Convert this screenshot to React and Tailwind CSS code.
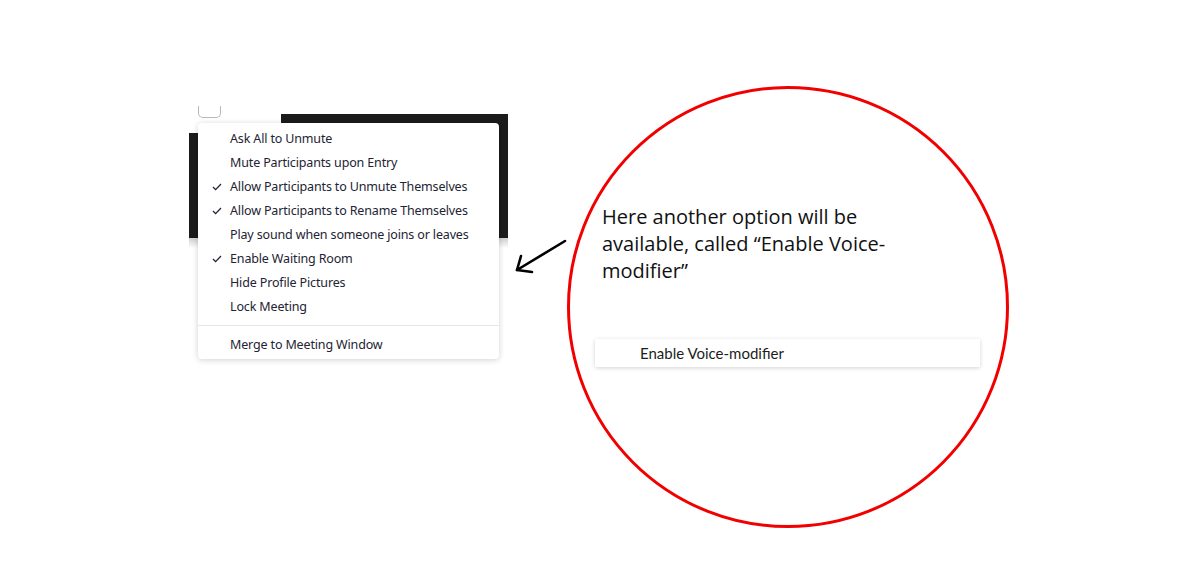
import React from 'react';

const menuItems = [
  { label: 'Ask All to Unmute', checked: false },
  { label: 'Mute Participants upon Entry', checked: false },
  { label: 'Allow Participants to Unmute Themselves', checked: true },
  { label: 'Allow Participants to Rename Themselves', checked: true },
  { label: 'Play sound when someone joins or leaves', checked: false },
  { label: 'Enable Waiting Room', checked: true },
  { label: 'Hide Profile Pictures', checked: false },
  { label: 'Lock Meeting', checked: false },
];

const Check = () => (
  <svg width="10" height="8" viewBox="0 0 10 8" className="absolute left-[14px] top-[8px]">
    <polyline points="1,4 3.6,6.6 9,1" fill="none" stroke="#232333" strokeWidth="1.3" />
  </svg>
);

const MenuRow = ({ label, checked }) => (
  <div className="relative h-6 flex items-center pl-8 text-[12.5px] tracking-[-0.15px] text-[#232333]">
    {checked && <Check />}
    <span>{label}</span>
  </div>
);

const App = () => {
  return (
    <div className="w-[1200px] h-[565px] bg-white flex items-start overflow-hidden">
      {/* Zoom participants panel snippet */}
      <div className="relative ml-[189px] mt-[114px] w-[319px]">
        <div className="h-[124px] bg-[#1b1b1b]" />
        <div className="h-[10px] bg-gradient-to-b from-[#cfcfcf] to-white" />
        <div className="absolute left-0 top-0 w-[92px] h-[19px] bg-white" />
        <div className="absolute left-[9px] top-[-8px] w-[23px] h-[12px] rounded-b-[5px] border border-t-0 border-[#b8b8b8] bg-white" />

        <div
          className="absolute left-[9px] top-[9px] w-[301px] bg-white rounded-[4px] shadow-[0_1px_6px_rgba(0,0,0,0.18)] pt-[4px] pb-[2px]"
          style={{ fontFamily: '"Noto Sans", "Open Sans", sans-serif' }}
        >
          {menuItems.map((item, idx) => (
            <MenuRow key={idx} label={item.label} checked={item.checked} />
          ))}
          <div className="mt-[6px] mb-[7px] h-px bg-[#e6e6ec]" />
          <MenuRow label="Merge to Meeting Window" checked={false} />
        </div>
      </div>

      {/* Arrow */}
      <svg width="59" height="50" viewBox="0 0 59 50" className="mt-[228px]">
        <line x1="57" y1="13" x2="9" y2="42" stroke="#000" strokeWidth="2.6" strokeLinecap="round" />
        <polyline
          points="13,28 9,42 24,44"
          fill="none"
          stroke="#000"
          strokeWidth="2.6"
          strokeLinecap="round"
          strokeLinejoin="round"
        />
      </svg>

      {/* Highlight circle */}
      <div className="mt-[86px] w-[442px] h-[442px] shrink-0 rounded-full border-[3px] border-[#f20000] flex flex-col pt-[114px] pl-[25px]">
        <p
          className="ml-[7px] w-[300px] text-[20px] leading-[27px] text-[#111]"
          style={{ fontFamily: '"Open Sans", "Noto Sans", sans-serif' }}
        >
          Here another option will be available, called “Enable Voice-modifier”
        </p>
        <div
          className="mt-[55px] w-[385px] h-[28px] bg-white shadow-[0_1px_4px_rgba(0,0,0,0.18)] flex items-center pl-[45px] pt-[1px] text-[15px] text-[#1d1d1d]"
          style={{ fontFamily: 'Lato, "Noto Sans", sans-serif' }}
        >
          Enable Voice-modifier
        </div>
      </div>
    </div>
  );
};

export default App;
